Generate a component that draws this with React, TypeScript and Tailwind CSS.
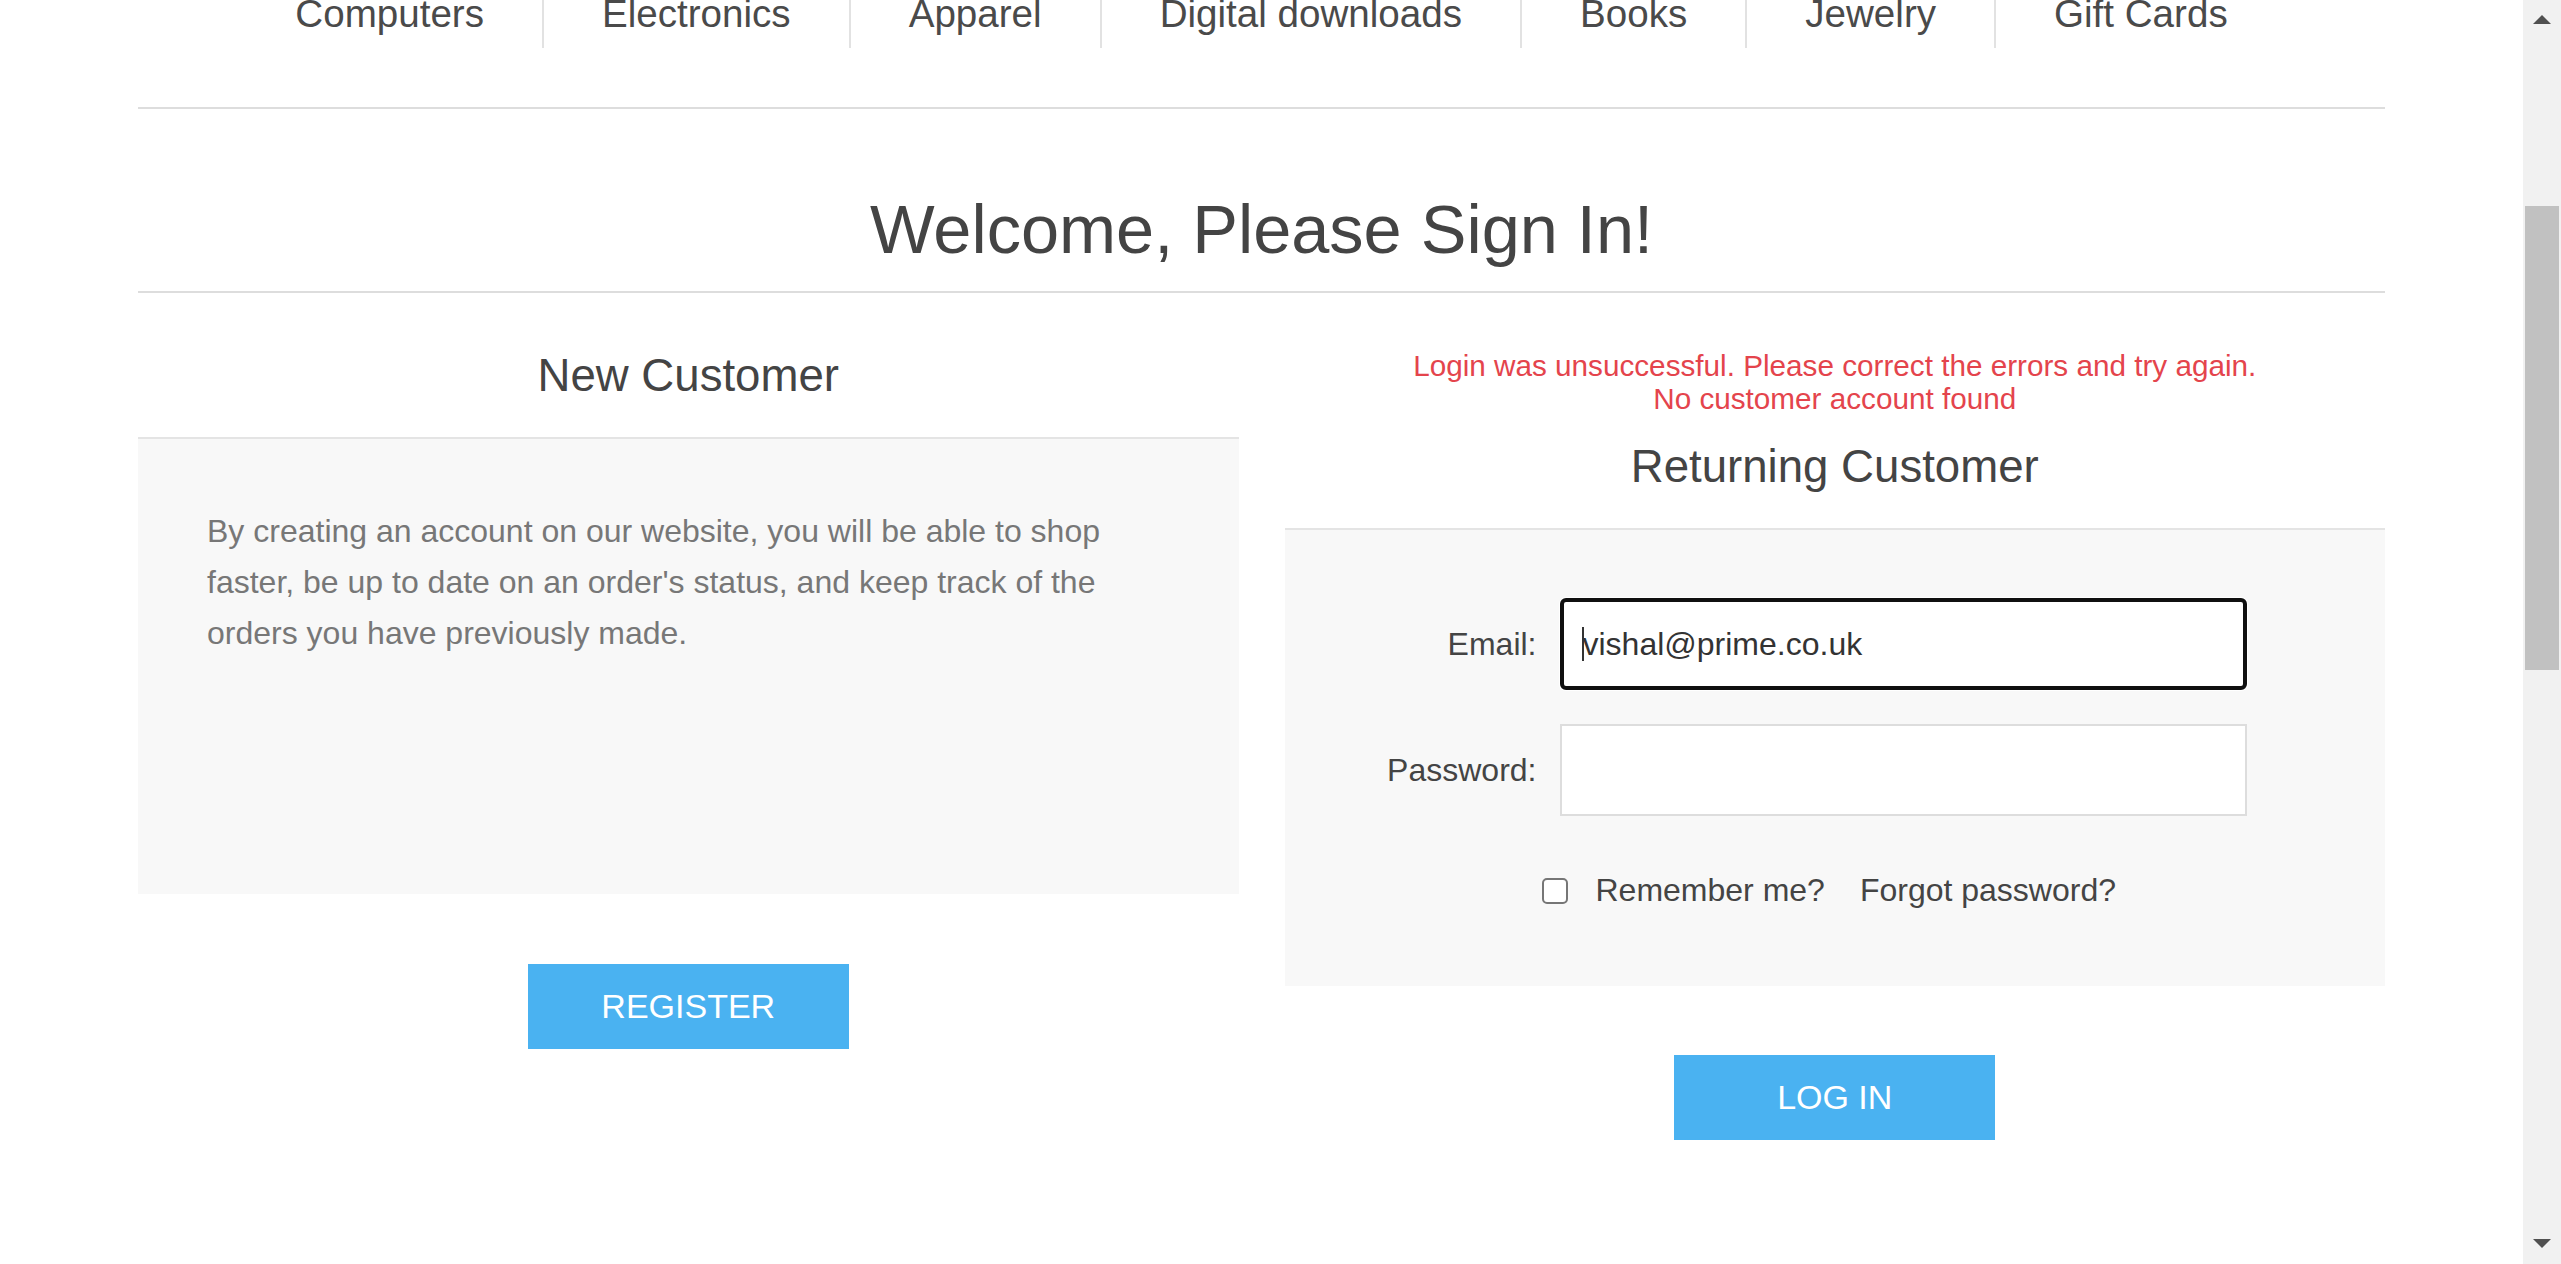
import { FC } from 'react';

const navItems = ['Computers', 'Electronics', 'Apparel', 'Digital downloads', 'Books', 'Jewelry', 'Gift Cards'];

const font = { fontFamily: '"Liberation Sans", Arial, sans-serif' };

// fake browser scrollbar on the right edge
const Scrollbar: FC = () => (
    <aside className="w-[38px] shrink-0 h-[1264px] bg-[#f1f1f1] flex flex-col items-center pt-[15px] pb-[16px]">
        <svg width="18" height="9" viewBox="0 0 18 9">
            <polygon points="9,0 18,9 0,9" fill="#505050" />
        </svg>
        <div className="mt-[182px] h-[464px] w-[34px] bg-[#c1c1c1]" />
        <div className="flex-1" />
        <svg width="18" height="9" viewBox="0 0 18 9">
            <polygon points="0,0 18,0 9,9" fill="#505050" />
        </svg>
    </aside>
);

const App: FC = () => {
    return (
        <div className="flex w-full h-[1264px] overflow-hidden bg-white" style={font}>
            <main className="flex-1 min-w-0">
                <div className="w-[2247px] mx-auto">
                    {/* top menu, page is scrolled so it is cut off */}
                    <nav className="-mt-[10px] pb-[59px] border-b-2 border-[#dddddd]">
                        <ul className="flex justify-center">
                            {navItems.map((item, i) => (
                                <li
                                    key={item}
                                    className={`h-[58px] px-[58px] text-[38.6px] leading-[48px] text-[#4a4a4a] ${i > 0 ? 'border-l-2 border-[#e2e2e2]' : ''}`}
                                >
                                    {item}
                                </li>
                            ))}
                        </ul>
                    </nav>

                    <h1 className="mt-[81px] pb-[21px] border-b-2 border-[#dddddd] text-center text-[68.5px] leading-[80px] text-[#444444]">
                        Welcome, Please Sign In!
                    </h1>

                    <div className="grid grid-cols-2 gap-[46px]">
                        {/* new customer */}
                        <section>
                            <h2 className="pt-[55px] pb-[33px] border-b-2 border-[#e4e4e4] text-center text-[45.6px] leading-[56px] text-[#444444]">
                                New Customer
                            </h2>
                            <div className="h-[455px] bg-[#f8f8f8] pt-[67px] px-[69px]">
                                <p className="text-[32px] leading-[51px] text-[#777777]">
                                    By creating an account on our website, you will be able to shop faster, be up to date on an order's status, and keep track of the orders you have previously made.
                                </p>
                            </div>
                            <div className="mt-[70px] flex justify-center">
                                <button className="w-[321px] h-[85px] bg-[#4ab2f1] text-white text-[34px] uppercase">
                                    Register
                                </button>
                            </div>
                        </section>

                        {/* returning customer */}
                        <section>
                            <div className="pt-[56px] text-center text-[29.7px] leading-[33px] text-[#e4444c]">
                                <p>Login was unsuccessful. Please correct the errors and try again.</p>
                                <p>No customer account found</p>
                            </div>
                            <h2 className="pt-[24px] pb-[33px] border-b-2 border-[#e4e4e4] text-center text-[45.6px] leading-[56px] text-[#444444]">
                                Returning Customer
                            </h2>
                            <div className="h-[456px] bg-[#f8f8f8] pt-[68px]">
                                <div className="flex items-center gap-[23px]">
                                    <label className="w-[252px] text-right text-[32px] text-[#444444]">Email:</label>
                                    <div className="relative w-[687px] h-[92px]">
                                        <input
                                            type="email"
                                            readOnly
                                            value="vishal@prime.co.uk"
                                            className="w-full h-full bg-white border-4 border-[#101010] rounded-[6px] pl-[19px] text-[32px] text-[#333333] outline-none shadow-[0_0_0_1px_#ffffff]"
                                        />
                                        <span className="absolute left-[22px] top-[29px] w-[2px] h-[34px] bg-[#333333]" />
                                    </div>
                                </div>
                                <div className="mt-[34px] flex items-center gap-[23px]">
                                    <label className="w-[252px] text-right text-[32px] text-[#444444]">Password:</label>
                                    <input
                                        type="password"
                                        className="w-[687px] h-[92px] bg-white border-2 border-[#dddddd] pl-[20px] text-[32px] outline-none"
                                    />
                                </div>
                                <div className="mt-[56px] pr-[11px] flex items-center justify-center text-[32px] leading-[37px] text-[#444444]">
                                    <input
                                        type="checkbox"
                                        className="appearance-none w-[26px] h-[26px] border-2 border-[#767676] rounded-[5px] bg-white"
                                    />
                                    <span className="ml-[27px]">Remember me?</span>
                                    <span className="ml-[35px]">Forgot password?</span>
                                </div>
                            </div>
                            <div className="mt-[69px] flex justify-center">
                                <button className="w-[321px] h-[85px] bg-[#4ab2f1] text-white text-[34px] uppercase">
                                    Log in
                                </button>
                            </div>
                        </section>
                    </div>
                </div>
            </main>
            <Scrollbar />
        </div>
    );
};

export default App;
